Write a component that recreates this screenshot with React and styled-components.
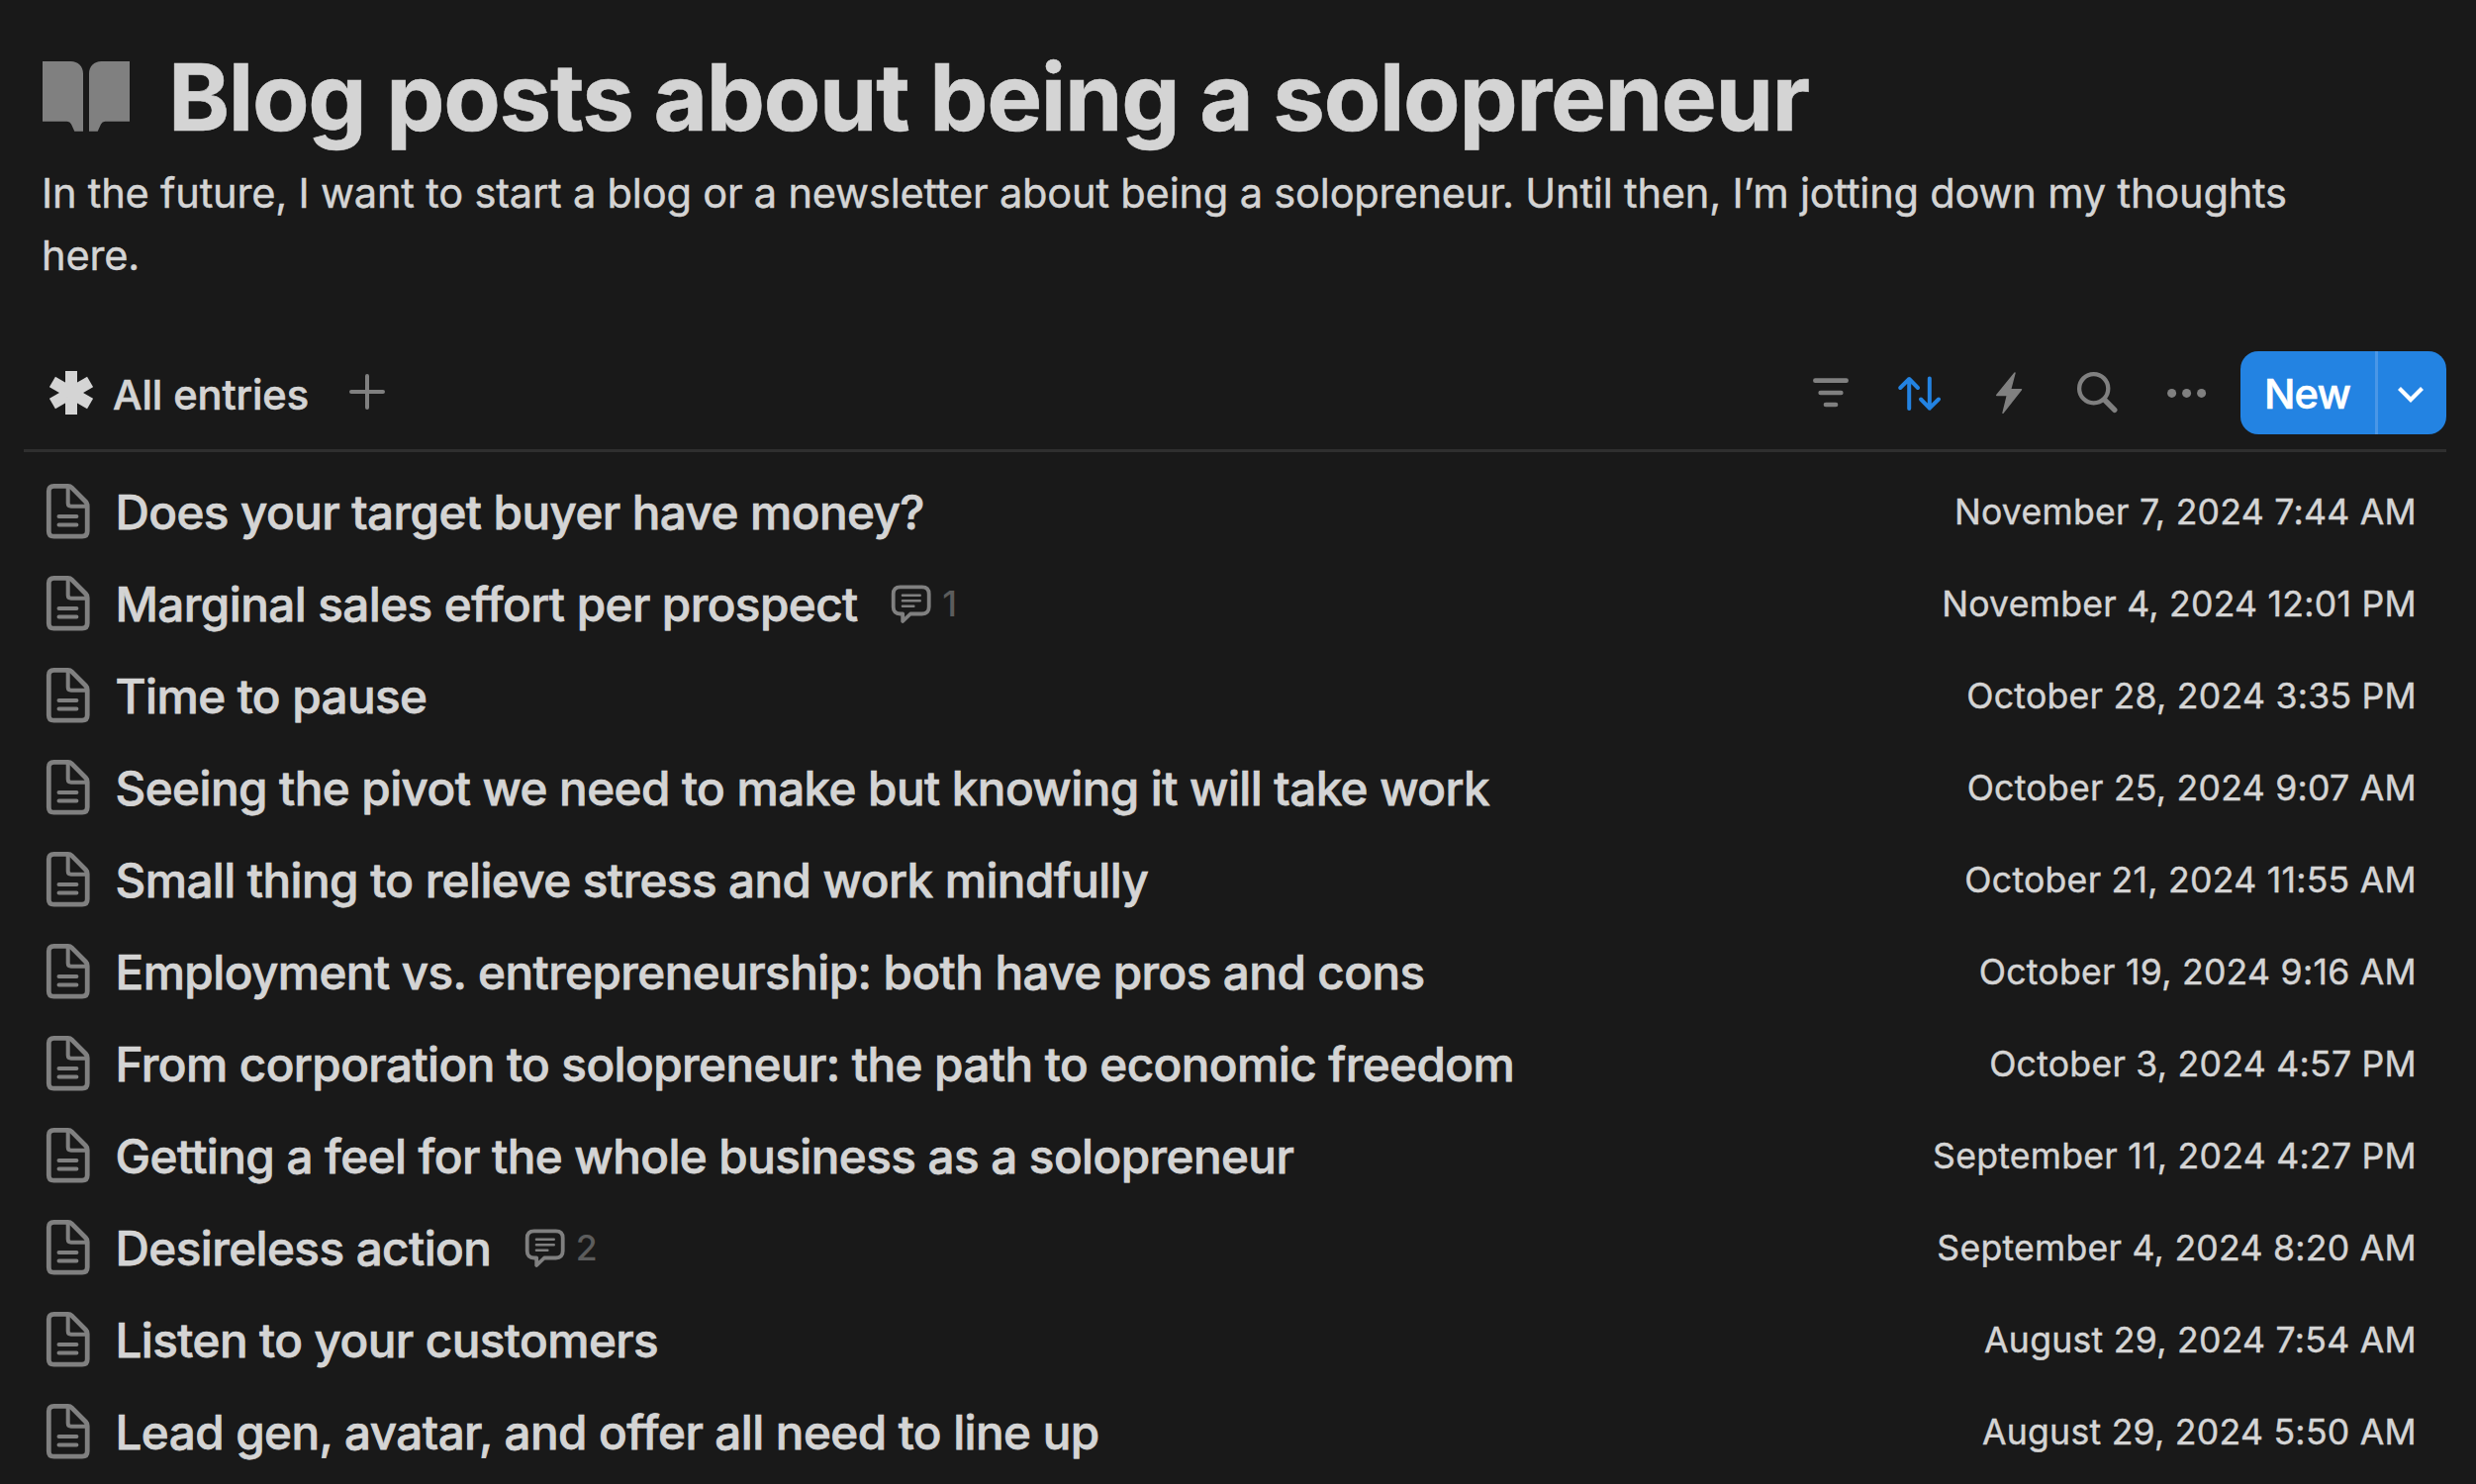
import styled, { createGlobalStyle } from "styled-components"

const posts = [
  { title: "Does your target buyer have money?", date: "November 7, 2024 7:44 AM" },
  { title: "Marginal sales effort per prospect", date: "November 4, 2024 12:01 PM", comments: 1 },
  { title: "Time to pause", date: "October 28, 2024 3:35 PM" },
  { title: "Seeing the pivot we need to make but knowing it will take work", date: "October 25, 2024 9:07 AM" },
  { title: "Small thing to relieve stress and work mindfully", date: "October 21, 2024 11:55 AM" },
  { title: "Employment vs. entrepreneurship: both have pros and cons", date: "October 19, 2024 9:16 AM" },
  { title: "From corporation to solopreneur: the path to economic freedom", date: "October 3, 2024 4:57 PM" },
  { title: "Getting a feel for the whole business as a solopreneur", date: "September 11, 2024 4:27 PM" },
  { title: "Desireless action", date: "September 4, 2024 8:20 AM", comments: 2 },
  { title: "Listen to your customers", date: "August 29, 2024 7:54 AM" },
  { title: "Lead gen, avatar, and offer all need to line up", date: "August 29, 2024 5:50 AM" },
]

const BookIcon = () => (
  <svg width="88" height="71" viewBox="0 0 88 71" fill="currentColor">
    <path d="M0 0H28.5C36 0 41 5 41 12.5V70.7H32.3L29 63.5Q27.7 60.7 24.8 60.7H0Z" />
    <path d="M88 0H59.5C52 0 47 5 47 12.5V70.7H55.7L59 63.5Q60.3 60.7 63.2 60.7H88Z" />
  </svg>
)

const AsteriskIcon = () => (
  <svg width="44" height="44" viewBox="0 0 44 44" fill="currentColor">
    <rect x="16" y="0" width="12" height="44" />
    <rect x="16" y="0" width="12" height="44" transform="rotate(60 22 22)" />
    <rect x="16" y="0" width="12" height="44" transform="rotate(120 22 22)" />
  </svg>
)

const PlusIcon = () => (
  <svg width="36" height="36" viewBox="0 0 36 36" stroke="currentColor" strokeWidth="4" strokeLinecap="round">
    <path d="M18 2V34M2 18H34" />
  </svg>
)

const FilterIcon = () => (
  <svg viewBox="0 0 60 60" fill="none" stroke="currentColor" strokeWidth="4.7" strokeLinecap="round">
    <path d="M14.4 17.7H45.6M19.7 30H40.3M25 42H35" />
  </svg>
)

const SortIcon = () => (
  <svg viewBox="0 0 60 60" fill="none" stroke="currentColor" strokeWidth="4" strokeLinecap="round" strokeLinejoin="round">
    <path d="M19.2 46V16M10.2 25L19.2 16L28 25" />
    <path d="M39.8 15.5V45.7M31 36.5L39.8 45.7L49 36.5" />
  </svg>
)

const BoltIcon = () => (
  <svg viewBox="0 0 60 60" fill="currentColor" stroke="currentColor" strokeWidth="1.4" strokeLinejoin="round">
    <path d="M36 10L17.7 32.5H28.4L24 50.3L42.5 26.7H31.6Z" />
  </svg>
)

const SearchIcon = () => (
  <svg viewBox="0 0 60 60" fill="none" stroke="currentColor" strokeLinecap="round">
    <circle cx="25.7" cy="25.7" r="14.6" strokeWidth="4.3" />
    <path d="M36.5 37L46.8 47.3" strokeWidth="5.4" />
  </svg>
)

const MoreIcon = () => (
  <svg viewBox="0 0 60 60" fill="currentColor">
    <circle cx="14.6" cy="30.4" r="4.5" />
    <circle cx="29.6" cy="30.4" r="4.5" />
    <circle cx="44.6" cy="30.4" r="4.5" />
  </svg>
)

const ChevronIcon = () => (
  <svg width="26" height="18" viewBox="0 0 26 18" fill="none" stroke="currentColor" strokeWidth="4.2">
    <path d="M1.5 2.5L13 14L24.5 2.5" />
  </svg>
)

const PageIcon = () => (
  <svg width="46" height="58" viewBox="0 0 46 58" fill="none" stroke="currentColor" strokeLinecap="round">
    <path
      d="M8.5 3.4H22.8Q25 3.4 26.5 4.9L40.5 19Q42.2 20.8 42.2 23.2V49Q42.2 54.2 37 54.2H8.5Q3.3 54.2 3.3 49V8.6Q3.3 3.4 8.5 3.4Z"
      strokeWidth="4.8"
    />
    <path d="M22.7 5V20.5Q22.7 23.7 25.9 23.7H41" strokeWidth="4" />
    <path d="M13.5 34H31.4M13.5 42.5H31.4" strokeWidth="4" />
  </svg>
)

const CommentIcon = () => (
  <svg width="41" height="40" viewBox="0 0 41 40" fill="none" stroke="currentColor" strokeLinecap="round" strokeLinejoin="round">
    <path
      d="M9.7 2.3H31.7Q38.7 2.3 38.7 9.3V22.5Q38.7 29.5 31.7 29.5H20L12.2 37V29.5H9.7Q2.7 29.5 2.7 22.5V9.3Q2.7 2.3 9.7 2.3Z"
      strokeWidth="3.8"
    />
    <path d="M12 10.7H29.7M12 16.3H29.7M12 21.8H23.3" strokeWidth="2.6" />
  </svg>
)

const Post = ({ title, date, comments }) => (
  <Row>
    <PageIcon />
    <PostTitle>{title}</PostTitle>
    {comments && (
      <Comments>
        <CommentIcon />
        <span>{comments}</span>
      </Comments>
    )}
    <PostDate>{date}</PostDate>
  </Row>
)

const App = () => {
  return (
    <>
      <GlobalStyle />
      <Page>
        <Header>
          <BookIcon />
          <h1>Blog posts about being a solopreneur</h1>
        </Header>
        <Description>
          In the future, I want to start a blog or a newsletter about being a
          solopreneur. Until then, I’m jotting down my thoughts here.
        </Description>
        <Toolbar>
          <ViewTab>
            <AsteriskIcon />
            <span>All entries</span>
          </ViewTab>
          <AddView aria-label="Add view">
            <PlusIcon />
          </AddView>
          <Actions>
            <IconButton aria-label="Filter"><FilterIcon /></IconButton>
            <IconButton aria-label="Sort" $active><SortIcon /></IconButton>
            <IconButton aria-label="Automations"><BoltIcon /></IconButton>
            <IconButton aria-label="Search"><SearchIcon /></IconButton>
            <IconButton aria-label="More"><MoreIcon /></IconButton>
          </Actions>
          <NewButton>
            <button className="new">New</button>
            <button className="options" aria-label="New options">
              <ChevronIcon />
            </button>
          </NewButton>
        </Toolbar>
        <List>
          {posts.map((post) => (
            <Post key={post.title} {...post} />
          ))}
        </List>
      </Page>
    </>
  )
}

const GlobalStyle = createGlobalStyle`
  * {
    box-sizing: border-box;
  }
  body {
    margin: 0;
    background: #191919;
    color: #d4d4d4;
    font-family: Inter, "Liberation Sans", sans-serif;
  }
  button {
    padding: 0;
    border: none;
    background: none;
    color: inherit;
    font: inherit;
    cursor: pointer;
  }
  svg {
    display: block;
    flex-shrink: 0;
  }
`

const Page = styled.main`
  height: 1500px;
  padding: 40px 30px 0 24px;
  overflow: hidden;
`

const Header = styled.header`
  display: flex;
  align-items: flex-start;
  gap: 39px;
  padding-left: 19px;
  svg {
    margin-top: 22px;
    color: #808080;
  }
  h1 {
    margin: 0;
    font-size: 94px;
    font-weight: 700;
    line-height: 116px;
    letter-spacing: -1.33px;
    white-space: nowrap;
    -webkit-text-stroke: 0.6px;
  }
`

const Description = styled.p`
  margin: 8px 100px 65px 18px;
  font-size: 41.6px;
  line-height: 63px;
  letter-spacing: -0.21px;
  -webkit-text-stroke: 0.45px;
`

const Toolbar = styled.div`
  display: flex;
  align-items: center;
  padding: 0 0 15px 26px;
  border-bottom: 3px solid #2f2f2f;
`

const ViewTab = styled.div`
  display: flex;
  align-items: center;
  gap: 20px;
  font-size: 41.6px;
  font-weight: 500;
  line-height: 56px;
  letter-spacing: -0.1px;
  -webkit-text-stroke: 0.6px;
  span {
    padding-top: 4px;
  }
`

const AddView = styled.button`
  margin: 0 0 2px 41px;
  color: #808080;
`

const Actions = styled.div`
  display: flex;
  gap: 30px;
  margin-left: auto;
`

const IconButton = styled.button`
  width: 60px;
  height: 60px;
  color: ${({ $active }) => ($active ? "#2383e2" : "#808080")};
`

const NewButton = styled.div`
  display: flex;
  width: 208px;
  height: 84px;
  margin-left: 24px;
  border-radius: 18px;
  overflow: hidden;
  background: #2383e2;
  color: white;
  .new {
    width: 139px;
    padding: 2px 0 0 24px;
    border-right: 3px solid #4a97e7;
    font-size: 41.6px;
    font-weight: 500;
    letter-spacing: -0.9px;
    text-align: left;
    -webkit-text-stroke: 0.6px;
  }
  .options {
    display: flex;
    flex: 1;
    align-items: center;
    justify-content: center;
    padding: 4px 3px 0 0;
  }
`

const List = styled.div`
  padding: 14px 30px 0 22px;
`

const Row = styled.div`
  display: flex;
  align-items: center;
  height: 93px;
  > svg {
    margin-bottom: 2px;
    color: #808080;
  }
`

const PostTitle = styled.span`
  margin-left: 24.5px;
  font-size: 47.6px;
  font-weight: 500;
  line-height: 60px;
  letter-spacing: -0.56px;
  white-space: nowrap;
  -webkit-text-stroke: 0.75px;
`

const Comments = styled.div`
  display: flex;
  align-items: center;
  gap: 11px;
  margin-left: 33.5px;
  color: #808080;
  span {
    color: #5c5c5c;
    font-size: 35.6px;
    font-weight: 500;
    line-height: 44px;
  }
`

const PostDate = styled.span`
  margin-left: auto;
  font-size: 35.6px;
  line-height: 44px;
  letter-spacing: 0.27px;
  white-space: nowrap;
  -webkit-text-stroke: 0.45px;
`

export default App
